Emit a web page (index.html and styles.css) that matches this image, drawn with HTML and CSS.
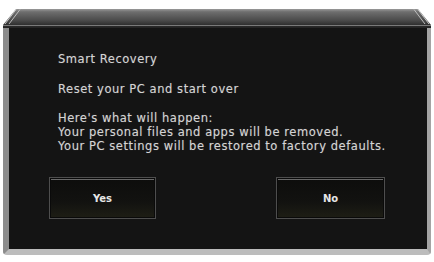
FILE: index.html
```html
<!DOCTYPE html>
<html>
<head>
<meta charset="utf-8">
<link rel="stylesheet" href="styles.css">
</head>
<body>
<div class="device">
  <svg class="bevel" width="428" height="19" viewBox="0 0 428 19">
    <defs>
      <linearGradient id="bv" x1="0" y1="0" x2="0" y2="1">
        <stop offset="0" stop-color="#9a9a9a"/>
        <stop offset="0.15" stop-color="#6e6e6e"/>
        <stop offset="0.6" stop-color="#4a4a4a"/>
        <stop offset="0.85" stop-color="#2e2e2e"/>
        <stop offset="1" stop-color="#222"/>
      </linearGradient>
    </defs>
    <polygon points="13,0 415,0 428,16 428,19 0,19 0,16" fill="url(#bv)"/>
    <line x1="0" y1="16.5" x2="428" y2="16.5" stroke="#7a7a7a" stroke-width="1"/>
    <line x1="13" y1="0.5" x2="2" y2="15" stroke="#c8c8c8" stroke-width="1"/>
    <line x1="17" y1="0.5" x2="6" y2="15" stroke="#bdbdbd" stroke-width="1"/>
    <line x1="415" y1="0.5" x2="426" y2="15" stroke="#c8c8c8" stroke-width="1"/>
    <line x1="411" y1="0.5" x2="422" y2="15" stroke="#bdbdbd" stroke-width="1"/>
  </svg>
  <div class="screen">
    <p class="title">Smart Recovery</p>
    <p class="lead">Reset your PC and start over</p>
    <p class="info">Here's what will happen:<br>Your personal files and apps will be removed.<br>Your PC settings will be restored to factory defaults.</p>
    <div class="actions">
      <button class="btn btn-yes">Yes</button>
      <button class="btn btn-no">No</button>
    </div>
  </div>
</div>
</body>
</html>
```

FILE: styles.css
```css
html, body {
  margin: 0;
  background: #ffffff;
}

.device {
  margin: 9px 3px 0 3px;
  width: 428px;
}

.bevel {
  display: block;
}

.screen {
  height: 227px;
  box-sizing: border-box;
  background: #141414;
  border-left: 6px solid #8c8c8c;
  border-right: 4px solid #a4a4a4;
  border-bottom: 6px solid #bcbcbc;
  border-radius: 0 0 4px 4px;
  padding: 24px 0 0 49px;
  font-family: "DejaVu Sans", "Open Sans", sans-serif;
  font-size: 11.5px;
  line-height: 14px;
  letter-spacing: 0.55px;
  color: #d4d4d4;
  text-shadow: 0 0 1px rgba(220, 220, 220, 0.35);
}

.screen p {
  margin: 0;
}

.lead {
  margin-top: 16px !important;
}

.info {
  margin-top: 15px !important;
}

.actions {
  display: flex;
  margin-top: 24px;
  margin-left: -9px;
  gap: 120px;
}

.btn {
  width: 107px;
  height: 42px;
  box-sizing: border-box;
  border: 1px solid #4e4e4e;
  box-shadow: inset 0 0 0 1px #0a0a0a, inset 0 2px 0 0 #6a6a6a;
  background: linear-gradient(#0d0d0c 0%, #121210 60%, #1e1e15 100%);
  color: #e6e6e6;
  font-family: "DejaVu Sans", "Open Sans", sans-serif;
  font-size: 10px;
  font-weight: bold;
  letter-spacing: 0;
  padding: 0;
}

.btn-no {
  width: 109px;
}
```
